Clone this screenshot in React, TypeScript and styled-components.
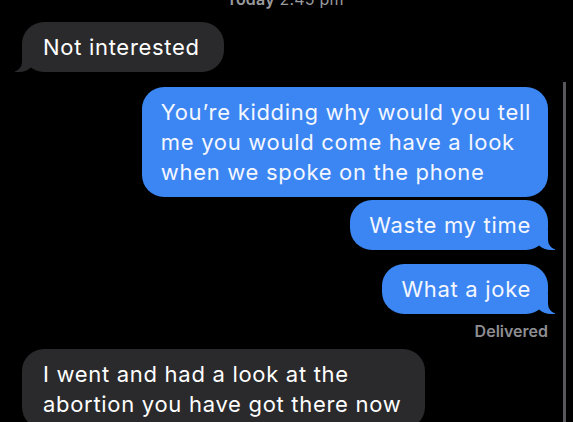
import React from "react";
import styled, { createGlobalStyle, css } from "styled-components";

const BLUE = "#3b86f2";
const GRAY = "#2a2a2c";

const GlobalStyle = createGlobalStyle`
  html, body {
    margin: 0;
    background: #000;
    overflow: hidden;
  }
  body {
    font-family: Inter, "Liberation Sans", Arial, sans-serif;
    -webkit-font-smoothing: antialiased;
  }
`;

const Screen = styled.div`
  position: relative;
  width: 573px;
  height: 422px;
  overflow: hidden;
  background: #000;
`;

const Thread = styled.div`
  display: flex;
  flex-direction: column;
  padding: 0 25px 0 22px;
`;

const Stamp = styled.div`
  align-self: center;
  margin: -10px 0 14px;
  font-size: 16px;
  line-height: 18px;
  color: #9a9a9f;
  letter-spacing: 0.2px;

  b {
    font-weight: 600;
  }
`;

const tailOut = css`
  &::before {
    content: "";
    position: absolute;
    bottom: 0;
    right: -7px;
    height: 20px;
    border-right: 20px solid ${BLUE};
    border-bottom-left-radius: 16px 14px;
  }
  &::after {
    content: "";
    position: absolute;
    bottom: 0;
    right: -26px;
    width: 26px;
    height: 20px;
    background: #000;
    border-bottom-left-radius: 10px;
  }
`;

const tailIn = css`
  &::before {
    content: "";
    position: absolute;
    bottom: 0;
    left: -7px;
    height: 20px;
    border-left: 20px solid ${GRAY};
    border-bottom-right-radius: 16px 14px;
  }
  &::after {
    content: "";
    position: absolute;
    bottom: 0;
    left: -26px;
    width: 26px;
    height: 20px;
    background: #000;
    border-bottom-right-radius: 10px;
  }
`;

const Bubble = styled.div<{ $out?: boolean; $tail?: boolean; $space?: number }>`
  position: relative;
  align-self: ${(p) => (p.$out ? "flex-end" : "flex-start")};
  margin-top: ${(p) => p.$space ?? 0}px;
  padding: ${(p) => (p.$out ? "10px 17px 10px 19px" : "10px 24px 10px 21px")};
  border-radius: 22px;
  background: ${(p) => (p.$out ? BLUE : GRAY)};
  color: ${(p) => (p.$out ? "#f4f7ff" : "#fff")};
  font-size: 22px;
  line-height: 30px;
  letter-spacing: 0.7px;
  white-space: nowrap;
  ${(p) => p.$tail && (p.$out ? tailOut : tailIn)}
`;

const Status = styled.div`
  align-self: flex-end;
  margin: 8px 0 8px;
  font-size: 16px;
  line-height: 19px;
  font-weight: 600;
  color: #8e8e93;
`;

const ScrollBar = styled.div`
  position: absolute;
  top: 82px;
  bottom: 0;
  right: 7px;
  width: 3px;
  background: #58585c;
`;

export default function App() {
  return (
    <Screen>
      <GlobalStyle />
      <Thread>
        <Stamp>
          <b>Today</b> 2:45 pm
        </Stamp>
        <Bubble $tail>Not interested</Bubble>
        <Bubble $out $space={15}>
          You’re kidding why would you tell
          <br />
          me you would come have a look
          <br />
          when we spoke on the phone
        </Bubble>
        <Bubble $out $tail $space={3}>
          Waste my time
        </Bubble>
        <Bubble $out $tail $space={14}>
          What a joke
        </Bubble>
        <Status>Delivered</Status>
        <Bubble $space={0}>
          I went and had a look at the
          <br />
          abortion you have got there now
        </Bubble>
      </Thread>
      <ScrollBar />
    </Screen>
  );
}
